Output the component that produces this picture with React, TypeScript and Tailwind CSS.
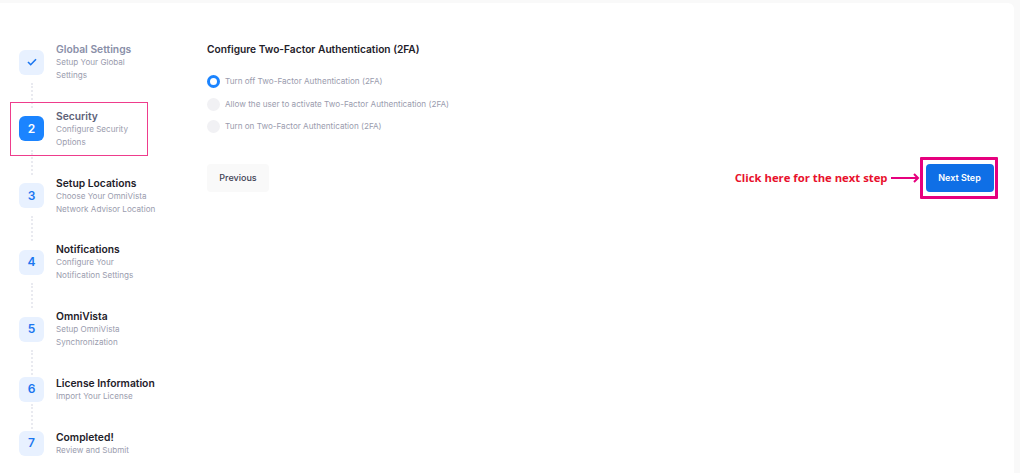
import React from "react";

const steps = [
  { id: 1, title: "Global Settings", lines: ["Setup Your Global", "Settings"], done: true },
  { id: 2, title: "Security", lines: ["Configure Security", "Options"], current: true },
  { id: 3, title: "Setup Locations", lines: ["Choose Your OmniVista", "Network Advisor Location"] },
  { id: 4, title: "Notifications", lines: ["Configure Your", "Notification Settings"] },
  { id: 5, title: "OmniVista", lines: ["Setup OmniVista", "Synchronization"] },
  { id: 6, title: "License Information", lines: ["Import Your License"] },
  { id: 7, title: "Completed!", lines: ["Review and Submit"] },
];

const options = [
  "Turn off Two-Factor Authentication (2FA)",
  "Allow the user to activate Two-Factor Authentication (2FA)",
  "Turn on Two-Factor Authentication (2FA)",
];

const StepBadge = ({ step }: { step: (typeof steps)[number] }) => {
  if (step.done) {
    return (
      <div className="flex h-[25px] w-[25px] shrink-0 items-center justify-center rounded-[6px] bg-[#e8f1ff]">
        <svg width="10" height="8" viewBox="0 0 10 8" fill="none">
          <path d="M1 4l2.7 2.7L9 1.2" stroke="#1b76f0" strokeWidth="1.6" />
        </svg>
      </div>
    );
  }
  return (
    <div
      className={
        step.current
          ? "flex h-[25px] w-[25px] shrink-0 items-center justify-center rounded-[6px] bg-[#1b84ff] text-[12px] font-semibold text-white"
          : "flex h-[25px] w-[25px] shrink-0 items-center justify-center rounded-[6px] bg-[#e8f1ff] text-[12px] font-semibold text-[#1b76f0]"
      }
    >
      {step.id}
    </div>
  );
};

export default function App() {
  return (
    <div className="h-[473px] w-[1020px] overflow-hidden bg-[#f9f9f9] pt-[3px] pr-[6px] font-['Inter',sans-serif]">
      <div className="flex h-[470px] rounded-tr-[6px] bg-white pt-[39px] pl-[19px]">
        {/* Steps */}
        <div className="flex w-[188px] shrink-0 flex-col">
          {steps.map((step, index) => (
            <React.Fragment key={step.id}>
              <div className="relative flex items-center gap-[12px]">
                <StepBadge step={step} />
                <div>
                  <div
                    className={
                      step.done
                        ? "text-[10.3px] leading-[14px] font-semibold text-[#8a8fa8]"
                        : step.current
                          ? "text-[10.3px] leading-[14px] font-semibold text-[#5e6278]"
                          : "text-[10.3px] leading-[14px] font-semibold text-[#1e2129]"
                    }
                  >
                    {step.title}
                  </div>
                  <div className="text-[8.1px] leading-[13px] text-[#9a9cae]">
                    {step.lines.map((line) => (
                      <div key={line}>{line}</div>
                    ))}
                  </div>
                </div>
                {step.current && (
                  <div className="absolute top-[-7px] left-[-9px] h-[54px] w-[138px] border-[1.5px] border-[#ee3d8c]" />
                )}
              </div>
              {index < steps.length - 1 && (
                <div className="flex h-[26.8px] items-center pl-[12px]">
                  <div className="h-[25px] border-l-2 border-dotted border-[#e9eaf0]" />
                </div>
              )}
            </React.Fragment>
          ))}
        </div>

        {/* Form */}
        <div className="mt-px flex h-fit w-[791px] flex-col">
          <div className="text-[10.2px] leading-[13px] font-semibold text-[#1e2129]">
            Configure Two-Factor Authentication (2FA)
          </div>
          <div className="mt-[19px] flex flex-col gap-[9.5px]">
            {options.map((option, index) => (
              <div key={option} className="flex items-center gap-[5px]">
                <div
                  className={
                    index === 0
                      ? "h-[13px] w-[13px] rounded-full border-[3.5px] border-[#1b84ff] bg-white"
                      : "h-[13px] w-[13px] rounded-full bg-[#f1f1f4]"
                  }
                />
                <span className="text-[8.15px] leading-[13px] text-[#9a9cae]">{option}</span>
              </div>
            ))}
          </div>
          <div className="mt-[24px] flex items-center justify-between">
            <button className="h-[28px] w-[62px] rounded-[4px] bg-[#f9f9f9] text-[9px] font-medium text-[#3f4254]">
              Previous
            </button>
            <div className="flex items-center">
              <span className="font-['Open_Sans',sans-serif] text-[11.3px] font-bold text-[#e8112d]">
                Click here for the next step
              </span>
              <svg width="31" height="10" viewBox="0 0 31 10" fill="none" className="ml-[1px]">
                <path d="M2 5h27M25 1l4 4-4 4" stroke="#e6007e" strokeWidth="2" />
              </svg>
              <div className="rounded-[1px] border-[3px] border-[#e6007e] py-[4px] pr-[1.5px] pl-[3px]">
                <button className="block h-[28px] w-[68px] rounded-[4px] bg-[#0f6fe6] text-[9px] font-semibold text-white">
                  Next Step
                </button>
              </div>
            </div>
          </div>
        </div>
      </div>
    </div>
  );
}
